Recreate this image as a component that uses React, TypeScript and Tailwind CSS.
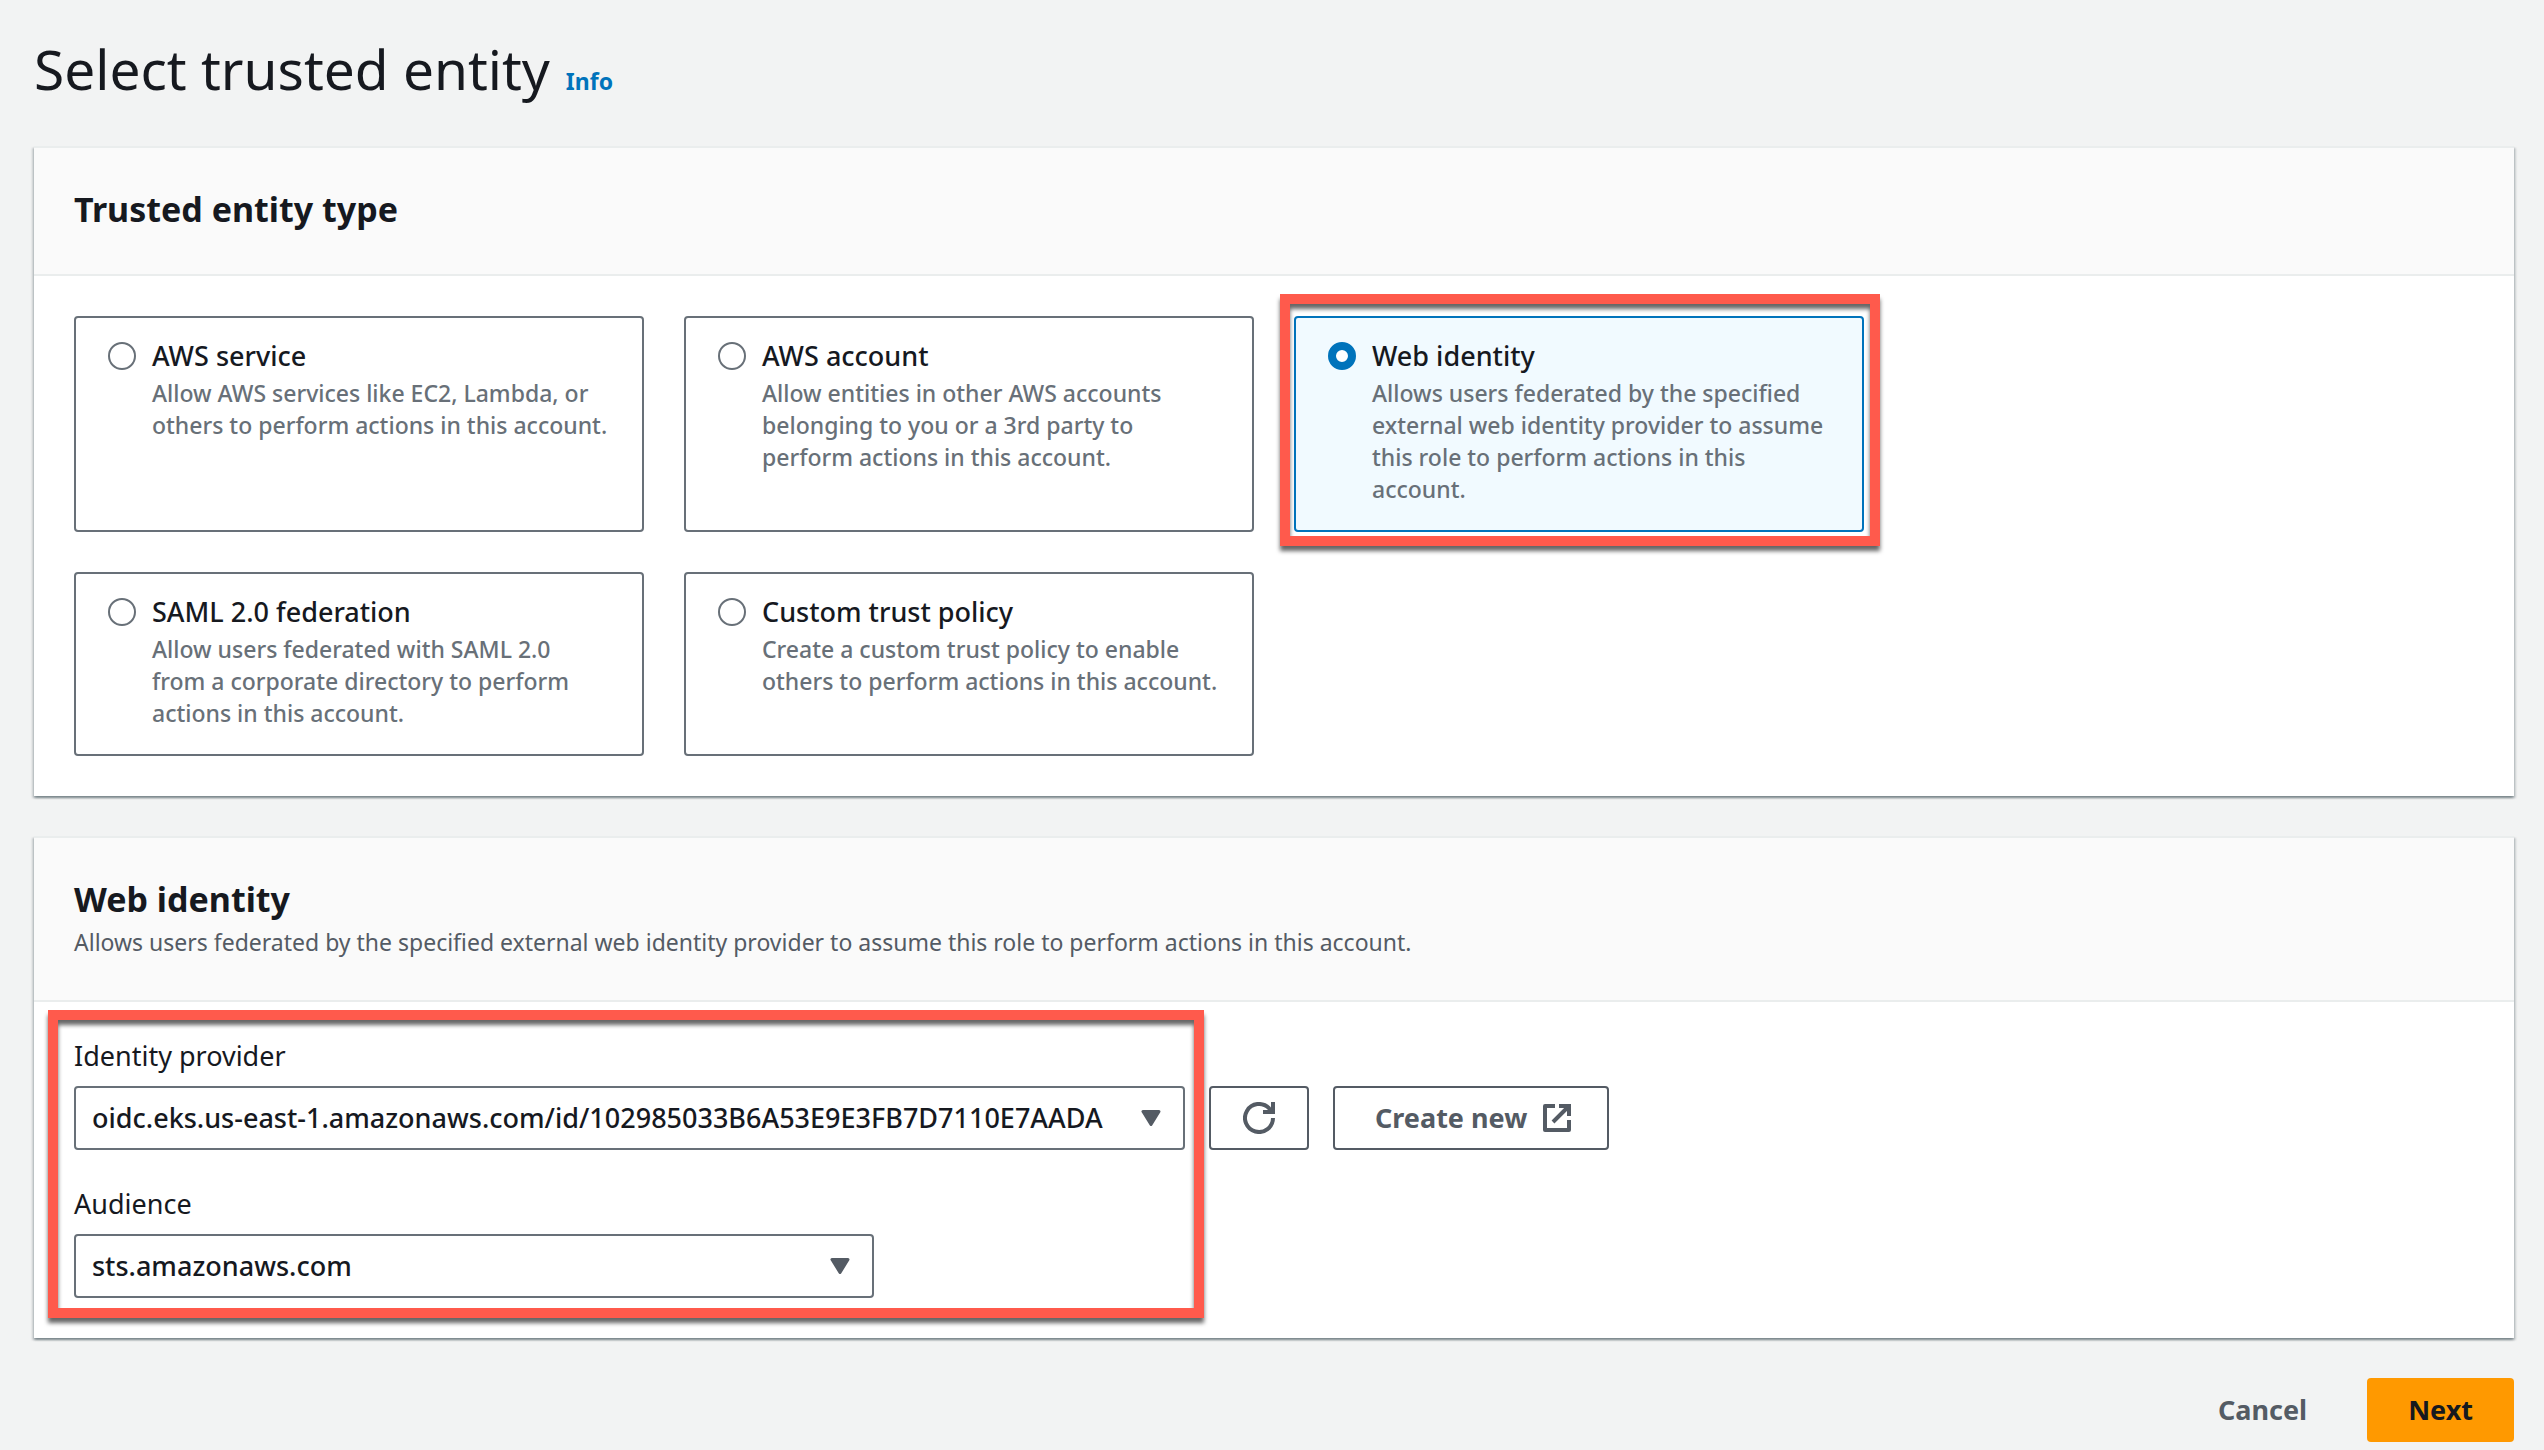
import { useState } from "react";
import type { ReactNode } from "react";
import clsx from "clsx";

const entityTypes = [
  {
    id: "aws-service",
    title: "AWS service",
    description: "Allow AWS services like EC2, Lambda, or others to perform actions in this account.",
  },
  {
    id: "aws-account",
    title: "AWS account",
    description:
      "Allow entities in other AWS accounts belonging to you or a 3rd party to perform actions in this account.",
  },
  {
    id: "web-identity",
    title: "Web identity",
    description:
      "Allows users federated by the specified external web identity provider to assume this role to perform actions in this account.",
  },
  {
    id: "saml",
    title: "SAML 2.0 federation",
    description:
      "Allow users federated with SAML 2.0 from\u00a0a corporate directory to perform actions in this account.",
  },
  {
    id: "custom",
    title: "Custom trust policy",
    description: "Create a custom trust policy to enable others to perform actions in this account.",
  },
];

function Highlight({ className }: { className: string }) {
  return (
    <div
      aria-hidden="true"
      className={clsx(
        "pointer-events-none absolute border-10 border-[#ff5a4c] drop-shadow-[0_5px_2px_rgba(0,0,0,0.6)]",
        className
      )}
    />
  );
}

function Panel({ title, description, children }: { title: string; description?: string; children: ReactNode }) {
  return (
    <section className="border-t-2 border-[#eaeded] bg-white shadow-[0_2px_2px_0_rgba(0,28,36,0.3),2px_2px_2px_0_rgba(0,28,36,0.15),-2px_2px_2px_0_rgba(0,28,36,0.15)]">
      <header className="border-b-2 border-[#eaeded] bg-[#fafafa] px-10 pt-[38px] pb-[42px]">
        <h2 className="text-[34px] leading-[46px] font-bold">{title}</h2>
        {description && <p className="mt-1 text-[23px] leading-8 text-[#545b64]">{description}</p>}
      </header>
      {children}
    </section>
  );
}

type EntityCardProps = {
  id: string;
  title: string;
  description: string;
  selected: boolean;
  onSelect: () => void;
};

function EntityCard({ id, title, description, selected, onSelect }: EntityCardProps) {
  return (
    <div className="relative">
      <label
        htmlFor={id}
        className={clsx(
          "flex h-full items-start gap-4 rounded-sm border-2 px-8 pt-[17px] pb-[25px]",
          selected ? "border-[#0073bb] bg-[#f1faff]" : "border-[#687078] bg-white"
        )}
      >
        <input
          id={id}
          type="radio"
          name="entity-type"
          checked={selected}
          onChange={onSelect}
          className="mt-[7px] size-7 shrink-0 appearance-none rounded-full border-2 border-[#687078] bg-white checked:border-8 checked:border-[#0073bb]"
        />
        <span className="flex flex-col font-medium">
          <span className="text-[27px] leading-[42px]">{title}</span>
          <span className="text-[23px] leading-8 text-[#687078]">{description}</span>
        </span>
      </label>
      {selected && <Highlight className="-top-[22px] -right-4 -bottom-[14px] -left-[14px]" />}
    </div>
  );
}

function SelectField({ id, label, value, className }: { id: string; label: string; value: string; className: string }) {
  return (
    <div className={clsx("flex flex-col gap-2", className)}>
      <label htmlFor={id} className="text-[27px] leading-[44px]">
        {label}
      </label>
      <div className="relative">
        <select
          id={id}
          className="h-16 w-full appearance-none rounded-sm border-2 border-[#687078] bg-white pr-14 pl-4 text-[27px] font-medium"
        >
          <option>{value}</option>
        </select>
        <svg
          viewBox="0 0 20 16"
          className="pointer-events-none absolute top-6 right-6 h-4 w-5 fill-[#545b64] stroke-[#545b64]"
          strokeWidth="3"
          strokeLinejoin="round"
        >
          <path d="M2 1.5h16L10 14.5z" />
        </svg>
      </div>
    </div>
  );
}

function RefreshIcon() {
  return (
    <svg viewBox="0 0 32 32" className="size-8" fill="none" stroke="#545b64" strokeWidth="4">
      <path d="M30 16a14 14 0 1 1-4-9.800l3 4.300" />
      <path d="M30 0v10H20" />
    </svg>
  );
}

function ExternalIcon() {
  return (
    <svg viewBox="0 0 28 28" className="size-7" fill="none" stroke="#545b64" strokeWidth="4">
      <path d="M12 2H2v24h24V16" strokeLinejoin="round" />
      <path d="M16 2h10v10M25.500 2.500L10 18" />
    </svg>
  );
}

export default function App() {
  const [selected, setSelected] = useState("web-identity");

  return (
    <main className="min-h-screen bg-[#f2f3f3] pt-[33px] pr-[30px] pb-2 pl-[34px] font-['Noto_Sans','Open_Sans',sans-serif] text-[#16191f]">
      <div className="flex items-baseline gap-4 pb-[41px]">
        <h1 className="text-[55px] leading-[72px]">Select trusted entity</h1>
        <a href="#info" className="text-[23px] font-bold text-[#0073bb]">
          Info
        </a>
      </div>

      <div className="flex flex-col gap-10">
        <Panel title="Trusted entity type">
          {/* three cards to a row, each a quarter of the panel */}
          <div className="grid grid-cols-4 gap-10 p-10 [&>*:nth-child(3n+1)]:col-start-1">
            {entityTypes.map((entity) => (
              <EntityCard
                key={entity.id}
                {...entity}
                selected={selected === entity.id}
                onSelect={() => setSelected(entity.id)}
              />
            ))}
          </div>
        </Panel>

        <Panel
          title="Web identity"
          description="Allows users federated by the specified external web identity provider to assume this role to perform actions in this account."
        >
          <div className="flex items-start gap-6 px-10 pt-8 pb-10">
            <div className="relative flex flex-col gap-8">
              <SelectField
                id="provider"
                label="Identity provider"
                value="oidc.eks.us-east-1.amazonaws.com/id/102985033B6A53E9E3FB7D7110E7AADA"
                className="w-[1111px]"
              />
              <SelectField id="audience" label="Audience" value="sts.amazonaws.com" className="w-[800px]" />
              <Highlight className="-top-6 -right-[19px] -bottom-5 -left-[26px]" />
            </div>
            <div className="flex gap-6 pt-[52px]">
              <button
                type="button"
                aria-label="Refresh"
                className="flex h-16 items-center rounded-sm border-2 border-[#545b64] px-8"
              >
                <RefreshIcon />
              </button>
              <button
                type="button"
                className="flex h-16 items-center gap-4 rounded-sm border-2 border-[#545b64] pr-9 pl-10 text-[27px] font-bold text-[#545b64]"
              >
                Create new
                <ExternalIcon />
              </button>
            </div>
          </div>
        </Panel>

        <footer className="flex justify-end gap-5">
          <button type="button" className="h-16 px-10 text-[27px] font-bold text-[#545b64]">
            Cancel
          </button>
          <button type="button" className="h-16 rounded-sm bg-[#ff9900] px-[41px] text-[27px] font-bold">
            Next
          </button>
        </footer>
      </div>
    </main>
  );
}
